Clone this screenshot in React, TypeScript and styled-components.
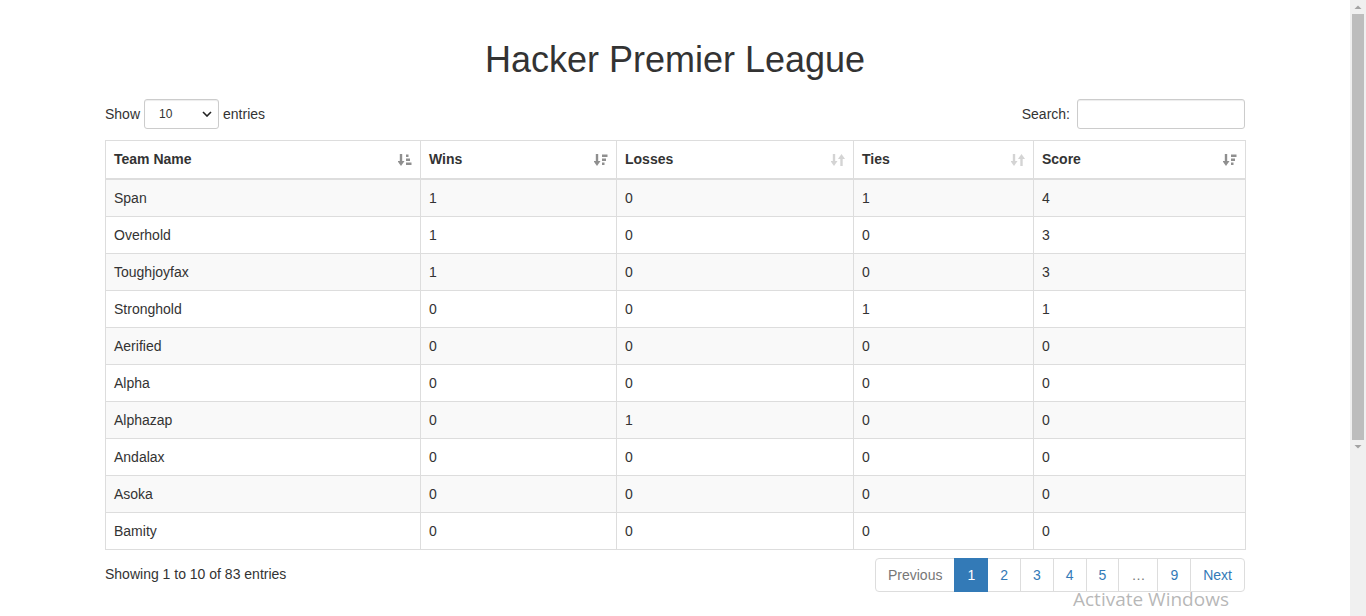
import styled, { createGlobalStyle } from 'styled-components';

type Team = { name: string; wins: number; losses: number; ties: number; score: number };

const teams: Team[] = [
  { name: 'Span', wins: 1, losses: 0, ties: 1, score: 4 },
  { name: 'Overhold', wins: 1, losses: 0, ties: 0, score: 3 },
  { name: 'Toughjoyfax', wins: 1, losses: 0, ties: 0, score: 3 },
  { name: 'Stronghold', wins: 0, losses: 0, ties: 1, score: 1 },
  { name: 'Aerified', wins: 0, losses: 0, ties: 0, score: 0 },
  { name: 'Alpha', wins: 0, losses: 0, ties: 0, score: 0 },
  { name: 'Alphazap', wins: 0, losses: 1, ties: 0, score: 0 },
  { name: 'Andalax', wins: 0, losses: 0, ties: 0, score: 0 },
  { name: 'Asoka', wins: 0, losses: 0, ties: 0, score: 0 },
  { name: 'Bamity', wins: 0, losses: 0, ties: 0, score: 0 },
];

type SortKind = 'asc' | 'desc' | 'both';

const columns: { label: string; width: number; sort: SortKind }[] = [
  { label: 'Team Name', width: 315, sort: 'asc' },
  { label: 'Wins', width: 196, sort: 'desc' },
  { label: 'Losses', width: 237, sort: 'both' },
  { label: 'Ties', width: 180, sort: 'both' },
  { label: 'Score', width: 212, sort: 'desc' },
];

function SortIcon({ kind }: { kind: SortKind }) {
  if (kind === 'both') {
    return (
      <SortSvg viewBox="0 0 14 14" $faint>
        <path d="M3 1v8" strokeWidth="2.4" stroke="currentColor" />
        <path d="M-0.5 8h7l-3.5 5z" fill="currentColor" />
        <path d="M10.5 13V5" strokeWidth="2.4" stroke="currentColor" />
        <path d="M7 6h7l-3.5-5z" fill="currentColor" />
      </SortSvg>
    );
  }
  const bars = kind === 'asc' ? [2.5, 4, 5.5] : [5.5, 4, 2.5];
  return (
    <SortSvg viewBox="0 0 14 14">
      <path d="M3 1v8" strokeWidth="2.4" stroke="currentColor" />
      <path d="M-0.5 8h7l-3.5 5z" fill="currentColor" />
      {bars.map((w, i) => (
        <rect key={i} x={8} y={1.5 + i * 4} width={w} height={2.5} fill="currentColor" />
      ))}
    </SortSvg>
  );
}

function App() {
  return (
    <>
      <GlobalStyle />
      <Viewport>
        <Page>
          <Container>
            <Title>Hacker Premier League</Title>
            <Controls>
              <Label>
                Show
                <SelectWrap>
                  <Select defaultValue="10">
                    <option value="10">10</option>
                    <option value="25">25</option>
                    <option value="50">50</option>
                    <option value="100">100</option>
                  </Select>
                  <Chevron viewBox="0 0 10 6">
                    <path d="M1 1l4 4 4-4" fill="none" stroke="#222" strokeWidth="1.6" />
                  </Chevron>
                </SelectWrap>
                entries
              </Label>
              <Label>
                Search:
                <SearchInput type="search" />
              </Label>
            </Controls>
            <Table>
              <thead>
                <tr>
                  {columns.map((c) => (
                    <Th key={c.label} style={{ width: c.width }}>
                      {c.label}
                      <SortIcon kind={c.sort} />
                    </Th>
                  ))}
                </tr>
              </thead>
              <tbody>
                {teams.map((t) => (
                  <Row key={t.name}>
                    <Td>{t.name}</Td>
                    <Td>{t.wins}</Td>
                    <Td>{t.losses}</Td>
                    <Td>{t.ties}</Td>
                    <Td>{t.score}</Td>
                  </Row>
                ))}
              </tbody>
            </Table>
            <Footer>
              <Info>Showing 1 to 10 of 83 entries</Info>
              <Pagination>
                <PageItem $disabled>Previous</PageItem>
                <PageItem $active>1</PageItem>
                <PageItem>2</PageItem>
                <PageItem>3</PageItem>
                <PageItem>4</PageItem>
                <PageItem>5</PageItem>
                <PageItem $disabled>…</PageItem>
                <PageItem>9</PageItem>
                <PageItem>Next</PageItem>
              </Pagination>
            </Footer>
          </Container>
          <Watermark>Activate Windows</Watermark>
        </Page>
        <ScrollTrack>
          <ScrollArrow viewBox="0 0 16 14">
            <path d="M4.5 9h7L8 5.5z" fill="#a3a3a3" />
          </ScrollArrow>
          <ScrollThumb />
          <ScrollArrow viewBox="0 0 16 14">
            <path d="M4.5 5h7L8 8.5z" fill="#a3a3a3" />
          </ScrollArrow>
        </ScrollTrack>
      </Viewport>
    </>
  );
}

const GlobalStyle = createGlobalStyle`
  html, body {
    margin: 0;
    height: 616px;
    overflow: hidden;
  }

  body {
    background: #fff;
    color: #333;
    font-family: "Liberation Sans", Arial, sans-serif;
    font-size: 14px;
    line-height: 20px;
  }

  * {
    box-sizing: border-box;
  }
`;

const Viewport = styled.div`
  display: flex;
  height: 616px;
`;

const Page = styled.div`
  position: relative;
  flex: 1;
  overflow: hidden;
`;

const Container = styled.div`
  width: 1170px;
  margin: 0 auto;
  padding: 40px 15px 0;
`;

const Title = styled.h1`
  margin: 0 0 19px;
  text-align: center;
  font-size: 36px;
  font-weight: 500;
  line-height: 1.1;
  color: #333;
`;

const Controls = styled.div`
  display: flex;
  align-items: center;
  justify-content: space-between;
  height: 30px;
  margin-bottom: 11px;
`;

const Label = styled.label`
  display: flex;
  align-items: center;
  font-weight: normal;
  line-height: 18px;
  white-space: nowrap;
`;

const SelectWrap = styled.span`
  position: relative;
  display: inline-block;
  margin: 0 4px;
`;

const Select = styled.select`
  appearance: none;
  width: 75px;
  height: 30px;
  padding: 0 10px 0 14px;
  font-family: "Liberation Sans", Arial, sans-serif;
  font-size: 12px;
  color: #333;
  background: #fff;
  border: 1px solid #ccc;
  border-radius: 3px;
  box-shadow: inset 0 1px 1px rgba(0, 0, 0, 0.075);
`;

const Chevron = styled.svg`
  position: absolute;
  right: 7px;
  top: 12px;
  width: 10px;
  height: 6px;
  pointer-events: none;
`;

const SearchInput = styled.input`
  width: 168px;
  height: 30px;
  margin-left: 7px;
  padding: 5px 10px;
  font-size: 12px;
  border: 1px solid #ccc;
  border-radius: 3px;
  box-shadow: inset 0 1px 1px rgba(0, 0, 0, 0.075);
`;

const Table = styled.table`
  width: 1140px;
  border-collapse: collapse;
  table-layout: fixed;
  border: 1px solid #ddd;
`;

const Th = styled.th`
  position: relative;
  padding: 8px 30px 9px 8px;
  text-align: left;
  font-weight: bold;
  border: 1px solid #ddd;
  border-bottom: 2px solid #ddd;
`;

const SortSvg = styled.svg<{ $faint?: boolean }>`
  position: absolute;
  right: 8px;
  top: 12px;
  width: 14px;
  height: 14px;
  color: ${(p) => (p.$faint ? '#d4d4d4' : '#8f8f8f')};
`;

const Row = styled.tr`
  &:nth-child(odd) {
    background: #f9f9f9;
  }
`;

const Td = styled.td`
  padding: 8px;
  border: 1px solid #ddd;
`;

const Footer = styled.div`
  display: flex;
  align-items: center;
  justify-content: space-between;
  margin-top: 8px;
`;

const Info = styled.div`
  padding-bottom: 2px;
`;

const Pagination = styled.ul`
  display: flex;
  margin: 0;
  padding: 0;
  list-style: none;
`;

const PageItem = styled.li<{ $active?: boolean; $disabled?: boolean }>`
  padding: 6px 12px;
  margin-left: -1px;
  border: 1px solid ${(p) => (p.$active ? '#337ab7' : '#ddd')};
  background: ${(p) => (p.$active ? '#337ab7' : '#fff')};
  color: ${(p) => (p.$active ? '#fff' : p.$disabled ? '#777' : '#337ab7')};
  position: relative;
  z-index: ${(p) => (p.$active ? 2 : 0)};

  &:first-child {
    margin-left: 0;
    border-radius: 4px 0 0 4px;
  }

  &:last-child {
    border-radius: 0 4px 4px 0;
  }
`;

const Watermark = styled.div`
  position: absolute;
  left: 1073px;
  top: 586px;
  font-family: "Open Sans", "DejaVu Sans", sans-serif;
  font-size: 19px;
  line-height: normal;
  color: rgba(160, 160, 160, 0.75);
  pointer-events: none;
  white-space: nowrap;
`;

const ScrollTrack = styled.div`
  display: flex;
  flex-direction: column;
  width: 16px;
  height: 616px;
  background: #f0f0f0;
`;

const ScrollArrow = styled.svg`
  flex: none;
  width: 16px;
  height: 14px;
`;

const ScrollThumb = styled.div`
  height: 426px;
  margin: 0 2px;
  background: #bdbdbd;
`;

export default App;
